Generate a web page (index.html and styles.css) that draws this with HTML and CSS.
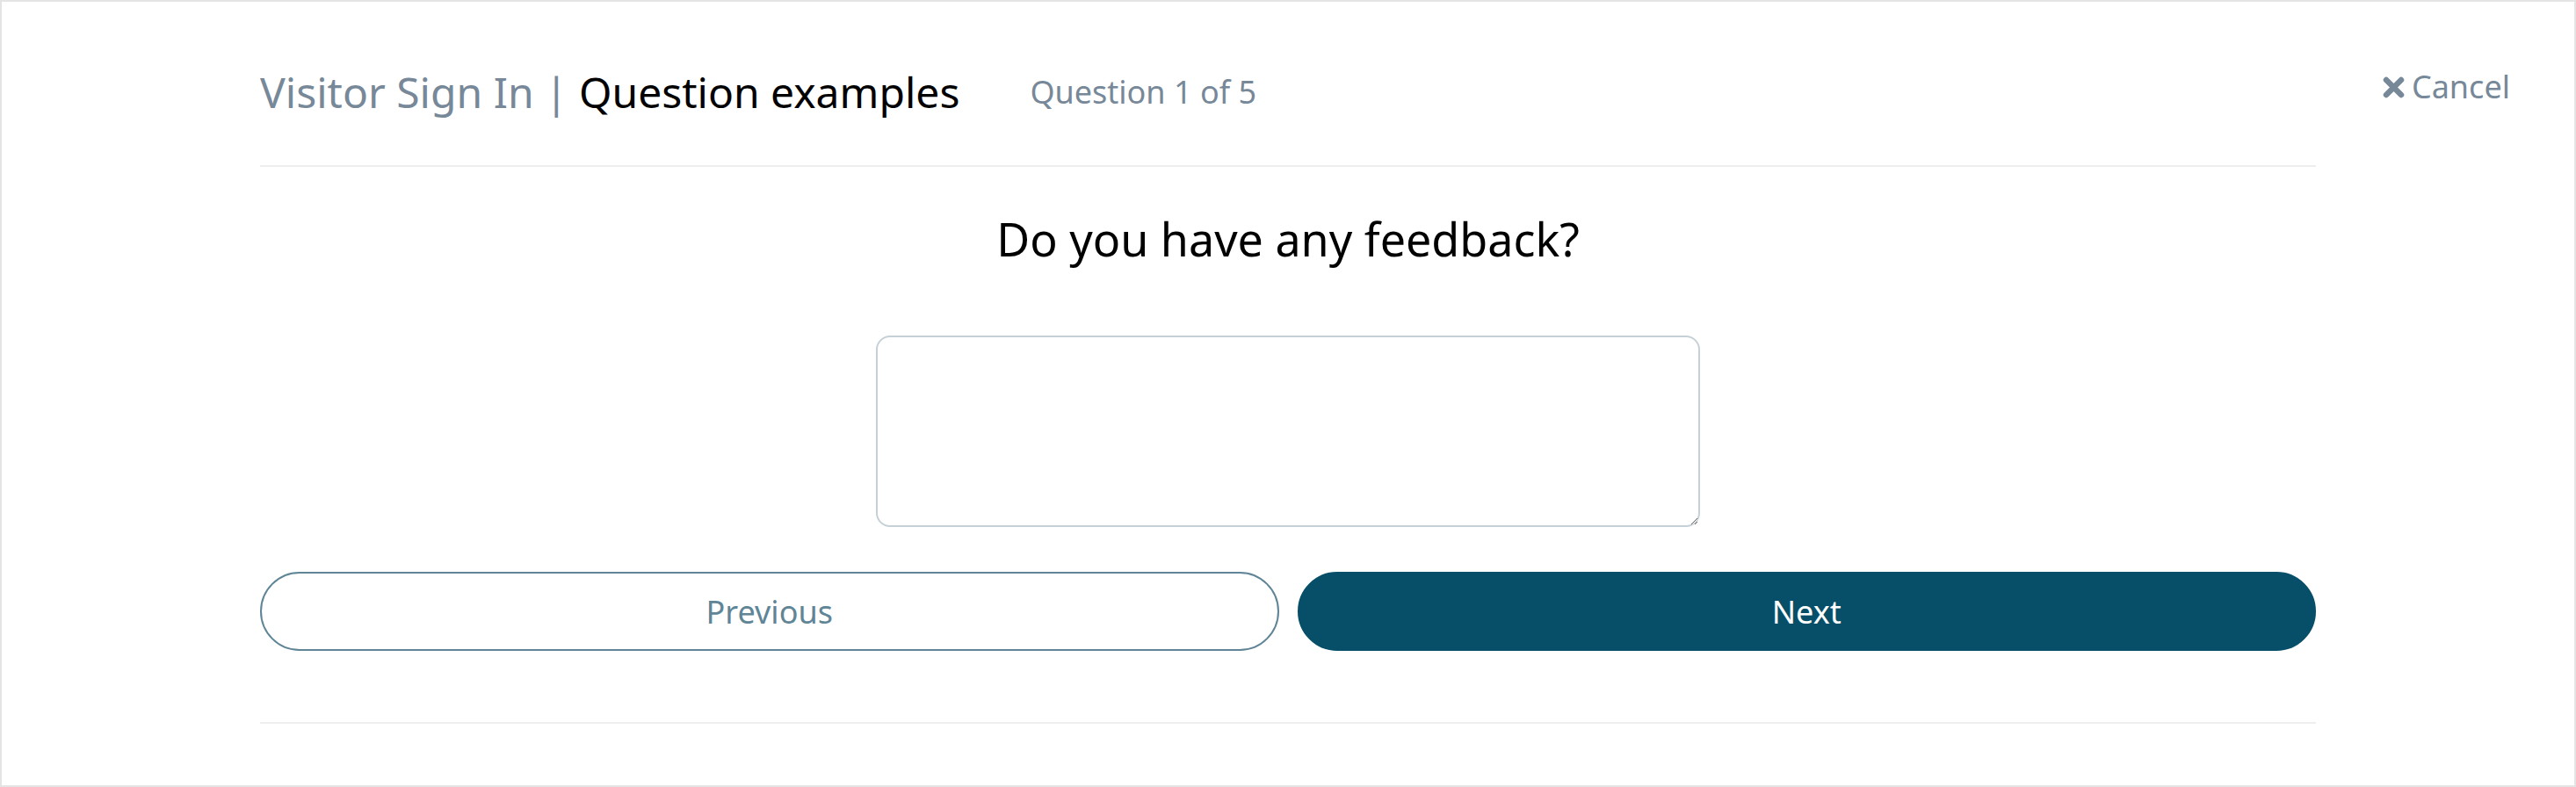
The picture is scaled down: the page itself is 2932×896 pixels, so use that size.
FILE: index.html
```html
<!DOCTYPE html>
<html lang="en">
<head>
<meta charset="utf-8">
<title>Visitor Sign In | Question examples</title>
<link rel="stylesheet" href="styles.css">
</head>
<body>
<div class="page">
  <main class="main">
    <header class="header">
      <h1 class="title"><span class="muted">Visitor Sign In | </span>Question examples</h1>
      <span class="progress">Question 1 of 5</span>
    </header>
    <h2 class="question">Do you have any feedback?</h2>
    <textarea class="answer" aria-label="Feedback"></textarea>
    <div class="actions">
      <button class="btn btn-outline" type="button">Previous</button>
      <button class="btn btn-primary" type="button">Next</button>
    </div>
    <div class="rule"></div>
  </main>
  <a class="cancel" href="#">
    <svg class="cancel-icon" width="25" height="25" viewBox="0 0 25 25" aria-hidden="true">
      <path d="M4 4 L21 21 M21 4 L4 21" stroke="#778899" stroke-width="6.5" stroke-linecap="round" fill="none"/>
    </svg>
    <span>Cancel</span>
  </a>
</div>
</body>
</html>
```
FILE: styles.css
```css
html, body {
  margin: 0;
  padding: 0;
  background: #ffffff;
}

body {
  font-family: "Noto Sans", "Open Sans", sans-serif;
  color: #000000;
}

.page {
  box-sizing: border-box;
  height: 896px;
  border: 2px solid #e4e4e4;
  display: grid;
  grid-template-columns: 1fr 2340px 1fr;
  align-items: start;
}

.main {
  grid-column: 2;
  grid-row: 1;
  padding-top: 71px;
}

.header {
  display: flex;
  align-items: center;
  padding-bottom: 51px;
  border-bottom: 2px solid #eeeeee;
}

.title {
  margin: 0;
  font-size: 48px;
  font-weight: 400;
  line-height: 64px;
  color: #000000;
  white-space: pre;
}

.muted {
  color: #778899;
}

.progress {
  margin-left: 80px;
  font-size: 36px;
  line-height: 64px;
  color: #778899;
}

.question {
  margin: 46px 0 0;
  font-size: 52px;
  font-weight: 400;
  line-height: 71px;
  text-align: center;
  color: #000000;
}

.answer {
  display: block;
  box-sizing: border-box;
  width: 938px;
  height: 218px;
  margin: 75px auto 0;
  border: 2px solid #c5d1d6;
  border-radius: 16px;
  background: #ffffff;
  font-family: "Noto Sans", sans-serif;
  font-size: 32px;
  outline: none;
}

.actions {
  display: grid;
  grid-template-columns: 1fr 1fr;
  gap: 21px;
  margin-top: 51px;
}

.btn {
  box-sizing: border-box;
  height: 90px;
  border-radius: 45px;
  font-family: "Noto Sans", sans-serif;
  font-size: 36px;
  display: flex;
  align-items: center;
  justify-content: center;
  padding: 0;
  cursor: pointer;
}

.btn-outline {
  background: #ffffff;
  border: 2px solid #5f8596;
  color: #5f8596;
}

.btn-primary {
  background: #074f69;
  border: 2px solid #074f69;
  color: #ffffff;
}

.rule {
  margin-top: 81px;
  border-top: 2px solid #eeeeee;
}

.cancel {
  grid-column: 3;
  grid-row: 1;
  justify-self: end;
  margin-top: 72px;
  margin-right: 73px;
  display: flex;
  align-items: center;
  gap: 8px;
  font-size: 36px;
  line-height: 49px;
  color: #778899;
  text-decoration: none;
}

.cancel-icon {
  display: block;
  margin-top: 1px;
}
```
